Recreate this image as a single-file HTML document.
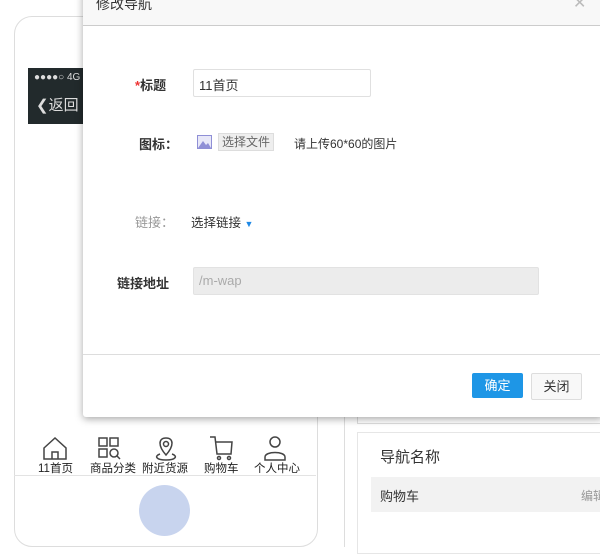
<!DOCTYPE html><html><head><meta charset="utf-8"><style>
body{margin:0;width:600px;height:547px;overflow:hidden;background:#fff;position:relative;font-family:"Liberation Sans","Noto Sans CJK SC",sans-serif;color:#333;font-size:12px}
.a{position:absolute;white-space:nowrap}
</style></head><body>
<div class="a" style="left:14px;top:16px;width:302px;height:529px;border:1px solid #ddd;border-radius:18px"></div>
<div class="a" style="left:28px;top:68px;width:56px;height:56px;background:#222a2c;color:#ddd">
<div class="a" style="left:6px;top:4px;font-size:10px;letter-spacing:0">●●●●○ 4G</div>
<div class="a" style="left:8px;top:26px;font-size:15px">❮返回</div></div>
<div class="a" style="left:344px;top:417px;width:1px;height:130px;background:#ddd"></div>
<div class="a" style="left:357px;top:417px;width:243px;height:6px;border:1px solid #ddd;border-top:none"></div>
<div class="a" style="left:357px;top:432px;width:243px;height:120px;border:1px solid #e6e6e6"></div>
<div class="a" style="left:380px;top:446px;font-size:15px">导航名称</div>
<div class="a" style="left:371px;top:477px;width:229px;height:35px;background:#f2f2f2"></div>
<div class="a" style="left:380px;top:486px;font-size:13px">购物车</div>
<div class="a" style="left:581px;top:487px;font-size:12px;color:#999">编辑</div>
<svg class="a" style="left:30px;top:434px" width="280" height="28" fill="none" stroke="#444" stroke-width="1.5">
<path d="M14 14 L25 4 L36 14 V25 H14Z M22 25 V18 H28 V25"/>
<rect x="69" y="4" width="8" height="8"/><rect x="80" y="4" width="8" height="8"/><rect x="69" y="15" width="8" height="8"/><circle cx="84" cy="19" r="4"/><path d="M87 22 L90 25"/>
<path d="M136 21 C128 12 128 4 136 4 C144 4 144 12 136 21Z"/><circle cx="136" cy="10" r="2.5"/><path d="M130 20 C124 22 126 26 136 26 C146 26 148 22 142 20"/>
<path d="M180 3 L185 3 L187 20 L201 20 L202 8 L186 8"/><circle cx="189" cy="24" r="1.5"/><circle cx="199" cy="24" r="1.5"/>
<circle cx="245" cy="8" r="5"/><path d="M235 26 V23 C235 17 255 17 255 23 V26Z"/></svg>
<div class="a" style="top:460px;left:14px;width:302px;font-size:11.5px;color:#222">
<span class="a" style="left:24px">11首页</span><span class="a" style="left:76px">商品分类</span><span class="a" style="left:128px">附近货源</span><span class="a" style="left:190px">购物车</span><span class="a" style="left:240px">个人中心</span></div>
<div class="a" style="left:14px;top:475px;width:302px;height:1px;background:#e3e3e3"></div>
<div class="a" style="left:139px;top:485px;width:51px;height:51px;border-radius:50%;background:#c8d4ee"></div>
<!-- modal -->
<div class="a" style="left:83px;top:-10px;width:520px;height:427px;background:#fff;border-radius:3px;box-shadow:0 2px 8px rgba(0,0,0,.35)">
<div class="a" style="left:0;top:0;width:520px;height:35px;background:#f8f8f8;border-bottom:1px solid #ccc"></div>
<div class="a" style="left:13px;top:4px;font-size:14px;color:#333">修改导航</div>
<div class="a" style="left:490px;top:3px;font-size:16px;color:#bbb">✕</div>
<div class="a" style="left:52px;top:85px;font-size:13px;font-weight:bold"><span style="color:#e33">*</span>标题</div>
<div class="a" style="left:110px;top:79px;width:176px;height:26px;border:1px solid #e0e0e0;border-radius:2px"></div>
<div class="a" style="left:116px;top:85px;font-size:13px">11首页</div>
<div class="a" style="left:56px;top:144px;font-weight:bold;font-size:13px">图标：</div>
<svg class="a" style="left:114px;top:145px" width="15" height="14"><rect width="15" height="14" fill="#8f8fd6"/><rect x="1" y="1" width="13" height="12" fill="#e8e8f8"/><path d="M1 13 L6 6 L9 10 L11 8 L14 13Z" fill="#8f8fd6"/></svg>
<div class="a" style="left:135px;top:143px;width:54px;height:16px;background:#eee;border:1px solid #ddd;color:#666;font-size:12px;line-height:16px;text-align:center">选择文件</div>
<div class="a" style="left:211px;top:145px;font-size:12px">请上传60*60的图片</div>
<div class="a" style="left:52px;top:222px;color:#999;font-size:13px">链接：</div>
<div class="a" style="left:108px;top:222px;font-size:12.5px">选择链接 <span style="color:#1e88e5;font-size:9px">▼</span></div>
<div class="a" style="left:34px;top:283px;font-weight:bold;font-size:13px">链接地址</div>
<div class="a" style="left:110px;top:277px;width:344px;height:26px;background:#ececec;border:1px solid #e2e2e2;border-radius:2px"></div>
<div class="a" style="left:116px;top:283px;color:#aaa;font-size:13px">/m-wap</div>
<div class="a" style="left:0;top:364px;width:520px;height:1px;background:#ddd"></div>
<div class="a" style="left:389px;top:383px;width:51px;height:25px;background:#1e96e6;color:#fff;border-radius:2px;line-height:25px;text-align:center;font-size:13px">确定</div>
<div class="a" style="left:448px;top:383px;width:49px;height:25px;background:#f8f8f8;border:1px solid #ddd;border-radius:2px;line-height:25px;text-align:center;font-size:13px">关闭</div>
</div>
</body></html>
